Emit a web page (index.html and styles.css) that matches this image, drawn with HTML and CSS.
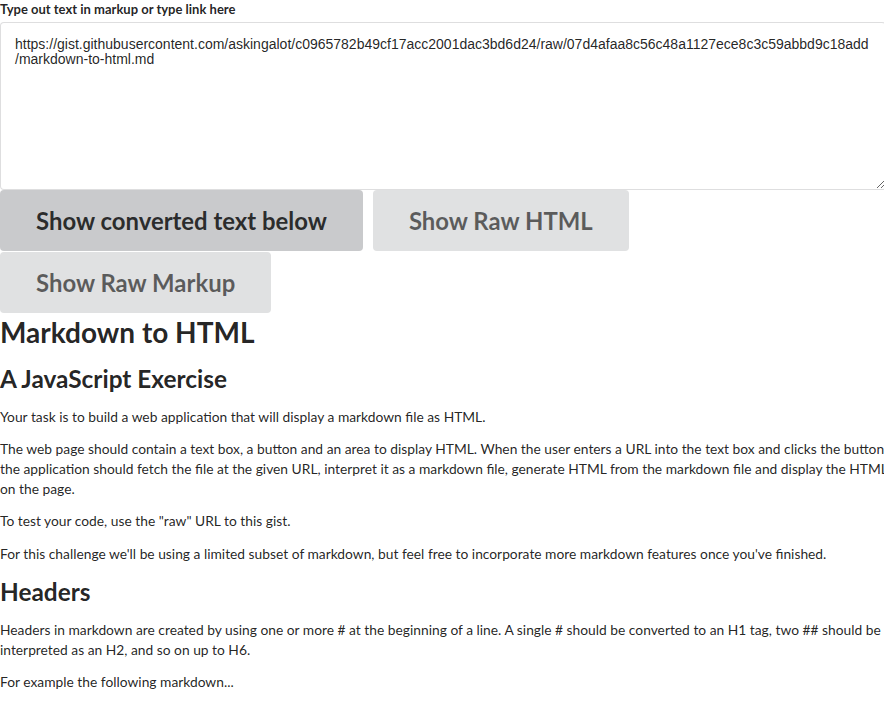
FILE: index.html
```html
<!DOCTYPE html>
<html lang="en">
<head>
<meta charset="utf-8">
<title>Markdown to HTML</title>
<link rel="stylesheet" href="styles.css">
</head>
<body>
<div class="page">
  <form class="form">
    <label class="field-label" for="src">Type out text in markup or type link here</label>
    <textarea id="src" class="source">https://gist.githubusercontent.com/askingalot/c0965782b49cf17acc2001dac3bd6d24/raw/07d4afaa8c56c48a1127ece8c3c59abbd9c18add/markdown-to-html.md</textarea>
  </form>
  <div class="buttons">
    <button class="btn btn-active" type="button">Show converted text below</button>
    <button class="btn" type="button">Show Raw HTML</button>
    <button class="btn" type="button">Show Raw Markup</button>
  </div>
  <div class="output">
    <h1>Markdown to HTML</h1>
    <h2>A JavaScript Exercise</h2>
    <p>Your task is to build a web application that will display a markdown file as HTML.</p>
    <p>The web page should contain a text box, a button and an area to display HTML. When the user enters a URL into the text box and clicks the button, the application should fetch the file at the given URL, interpret it as a markdown file, generate HTML from the markdown file and display the HTML on the page.</p>
    <p>To test your code, use the "raw" URL to this gist.</p>
    <p>For this challenge we'll be using a limited subset of markdown, but feel free to incorporate more markdown features once you've finished.</p>
    <h2>Headers</h2>
    <p>Headers in markdown are created by using one or more # at the beginning of a line. A single # should be converted to an H1 tag, two ## should be interpreted as an H2, and so on up to H6.</p>
    <p>For example the following markdown...</p>
  </div>
</div>
</body>
</html>
```
FILE: styles.css
```css
html, body {
  margin: 0;
  padding: 0;
  background: #ffffff;
  overflow: hidden;
}
body {
  font-family: Lato, "Helvetica Neue", Arial, sans-serif;
  font-size: 13.8px;
  line-height: 20px;
  color: rgba(0, 0, 0, 0.87);
}
.page {
  width: 900px;
}
.form {
  margin: 0;
}
.field-label {
  display: block;
  font-size: 13px;
  font-weight: 700;
  line-height: 18px;
  margin: 0 0 4px;
  color: rgba(0, 0, 0, 0.87);
}
.source {
  display: block;
  box-sizing: border-box;
  width: 886px;
  height: 168px;
  margin: 0;
  padding: 14px 14px;
  font-family: "Liberation Sans", Arial, sans-serif;
  font-size: 14px;
  line-height: 15px;
  color: rgba(0, 0, 0, 0.87);
  border: 1px solid rgba(34, 36, 38, 0.15);
  border-radius: 4px;
  resize: vertical;
  outline: none;
}
.buttons {
  display: flex;
  flex-wrap: wrap;
  column-gap: 10px;
  row-gap: 1px;
  margin: 0 0 1px;
}
.btn {
  font-family: Lato, "Helvetica Neue", Arial, sans-serif;
  font-size: 23.9px;
  font-weight: 700;
  line-height: 24px;
  height: 61px;
  padding: 0 36px;
  border: none;
  border-radius: 4px;
  background: #e0e1e2;
  color: rgba(0, 0, 0, 0.6);
  cursor: pointer;
}
.btn-active {
  background: #c9cacc;
  color: rgba(0, 0, 0, 0.8);
}
.output h1 {
  font-size: 28px;
  line-height: 36px;
  font-weight: 700;
  margin: 0 0 13px;
}
.output h2 {
  font-size: 24.4px;
  line-height: 31px;
  font-weight: 700;
  margin: 0 0 13px;
}
.output p {
  margin: 0 0 12.2px;
}
```
